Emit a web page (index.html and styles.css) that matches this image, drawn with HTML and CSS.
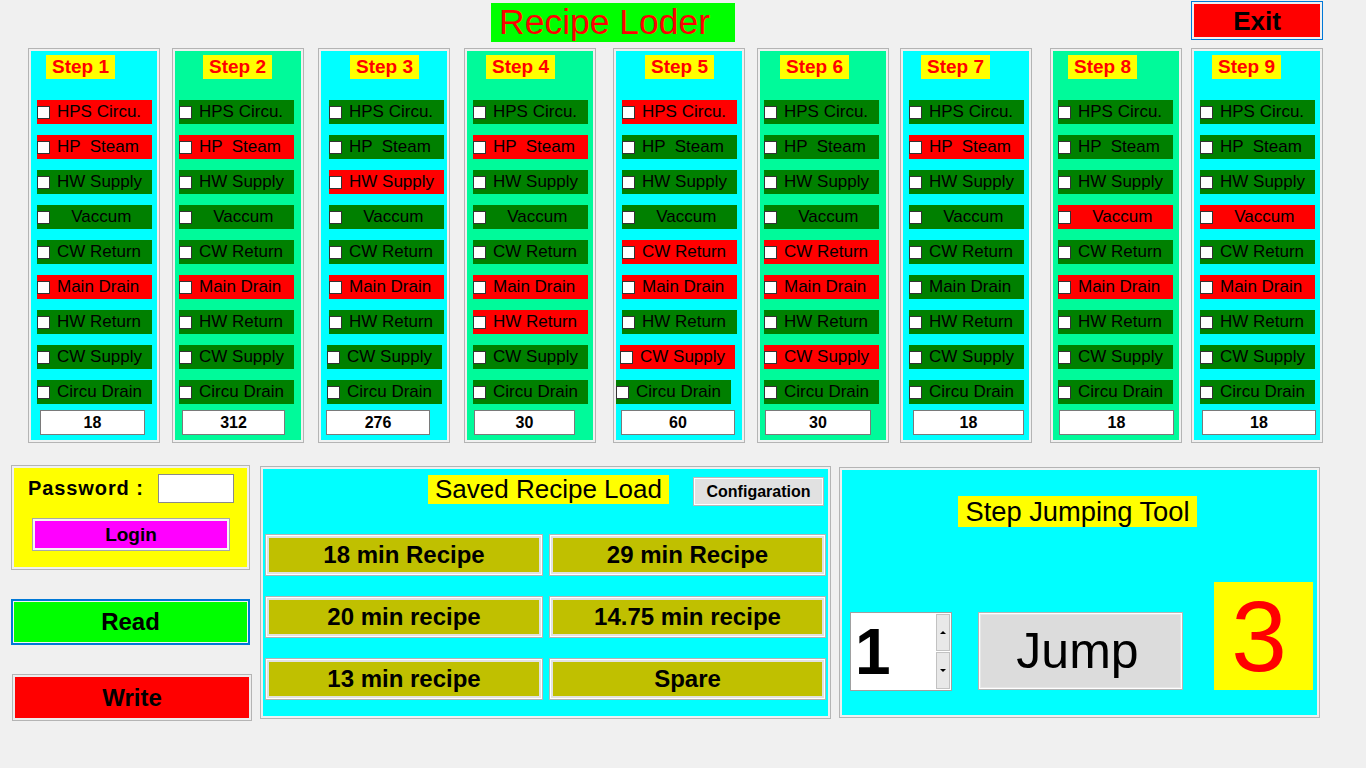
FILE: index.html
```html
<!DOCTYPE html>
<html lang="en">
<head>
<meta charset="utf-8">
<title>Recipe Loder</title>
<link rel="stylesheet" href="styles.css">
</head>
<body>
<div class="topbar">
  <div class="title">Recipe Loder</div>
  <button class="exit">Exit</button>
</div>

<div class="steps">
  <div class="step cyan s1">
    <div class="step-label">Step 1</div>
    <div class="rows">
      <div class="row on"><span class="cb"></span>HPS Circu.</div>
      <div class="row on"><span class="cb"></span>HP  Steam</div>
      <div class="row off"><span class="cb"></span>HW Supply</div>
      <div class="row off"><span class="cb"></span>   Vaccum</div>
      <div class="row off"><span class="cb"></span>CW Return</div>
      <div class="row on"><span class="cb"></span>Main Drain</div>
      <div class="row off"><span class="cb"></span>HW Return</div>
      <div class="row off"><span class="cb"></span>CW Supply</div>
      <div class="row off"><span class="cb"></span>Circu Drain</div>
    </div>
    <div class="num">18</div>
  </div>

  <div class="step spring s2">
    <div class="step-label">Step 2</div>
    <div class="rows">
      <div class="row off"><span class="cb"></span>HPS Circu.</div>
      <div class="row on"><span class="cb"></span>HP  Steam</div>
      <div class="row off"><span class="cb"></span>HW Supply</div>
      <div class="row off"><span class="cb"></span>   Vaccum</div>
      <div class="row off"><span class="cb"></span>CW Return</div>
      <div class="row on"><span class="cb"></span>Main Drain</div>
      <div class="row off"><span class="cb"></span>HW Return</div>
      <div class="row off"><span class="cb"></span>CW Supply</div>
      <div class="row off"><span class="cb"></span>Circu Drain</div>
    </div>
    <div class="num">312</div>
  </div>

  <div class="step cyan s3">
    <div class="step-label">Step 3</div>
    <div class="rows">
      <div class="row off"><span class="cb"></span>HPS Circu.</div>
      <div class="row off"><span class="cb"></span>HP  Steam</div>
      <div class="row on"><span class="cb"></span>HW Supply</div>
      <div class="row off"><span class="cb"></span>   Vaccum</div>
      <div class="row off"><span class="cb"></span>CW Return</div>
      <div class="row on"><span class="cb"></span>Main Drain</div>
      <div class="row off"><span class="cb"></span>HW Return</div>
      <div class="row off nudge"><span class="cb"></span>CW Supply</div>
      <div class="row off nudge"><span class="cb"></span>Circu Drain</div>
    </div>
    <div class="num">276</div>
  </div>

  <div class="step spring s4">
    <div class="step-label">Step 4</div>
    <div class="rows">
      <div class="row off"><span class="cb"></span>HPS Circu.</div>
      <div class="row on"><span class="cb"></span>HP  Steam</div>
      <div class="row off"><span class="cb"></span>HW Supply</div>
      <div class="row off"><span class="cb"></span>   Vaccum</div>
      <div class="row off"><span class="cb"></span>CW Return</div>
      <div class="row on"><span class="cb"></span>Main Drain</div>
      <div class="row on"><span class="cb"></span>HW Return</div>
      <div class="row off"><span class="cb"></span>CW Supply</div>
      <div class="row off"><span class="cb"></span>Circu Drain</div>
    </div>
    <div class="num">30</div>
  </div>

  <div class="step cyan s5">
    <div class="step-label">Step 5</div>
    <div class="rows">
      <div class="row on"><span class="cb"></span>HPS Circu.</div>
      <div class="row off"><span class="cb"></span>HP  Steam</div>
      <div class="row off"><span class="cb"></span>HW Supply</div>
      <div class="row off"><span class="cb"></span>   Vaccum</div>
      <div class="row on"><span class="cb"></span>CW Return</div>
      <div class="row on"><span class="cb"></span>Main Drain</div>
      <div class="row off"><span class="cb"></span>HW Return</div>
      <div class="row on nudge"><span class="cb"></span>CW Supply</div>
      <div class="row off shift"><span class="cb"></span>Circu Drain</div>
    </div>
    <div class="num">60</div>
  </div>

  <div class="step spring s6">
    <div class="step-label">Step 6</div>
    <div class="rows">
      <div class="row off"><span class="cb"></span>HPS Circu.</div>
      <div class="row off"><span class="cb"></span>HP  Steam</div>
      <div class="row off"><span class="cb"></span>HW Supply</div>
      <div class="row off"><span class="cb"></span>   Vaccum</div>
      <div class="row on"><span class="cb"></span>CW Return</div>
      <div class="row on"><span class="cb"></span>Main Drain</div>
      <div class="row off"><span class="cb"></span>HW Return</div>
      <div class="row on"><span class="cb"></span>CW Supply</div>
      <div class="row off"><span class="cb"></span>Circu Drain</div>
    </div>
    <div class="num">30</div>
  </div>

  <div class="step cyan s7">
    <div class="step-label">Step 7</div>
    <div class="rows">
      <div class="row off"><span class="cb"></span>HPS Circu.</div>
      <div class="row on"><span class="cb"></span>HP  Steam</div>
      <div class="row off"><span class="cb"></span>HW Supply</div>
      <div class="row off"><span class="cb"></span>   Vaccum</div>
      <div class="row off"><span class="cb"></span>CW Return</div>
      <div class="row off"><span class="cb"></span>Main Drain</div>
      <div class="row off"><span class="cb"></span>HW Return</div>
      <div class="row off"><span class="cb"></span>CW Supply</div>
      <div class="row off"><span class="cb"></span>Circu Drain</div>
    </div>
    <div class="num">18</div>
  </div>

  <div class="step spring s8">
    <div class="step-label">Step 8</div>
    <div class="rows">
      <div class="row off"><span class="cb"></span>HPS Circu.</div>
      <div class="row off"><span class="cb"></span>HP  Steam</div>
      <div class="row off"><span class="cb"></span>HW Supply</div>
      <div class="row on"><span class="cb"></span>   Vaccum</div>
      <div class="row off"><span class="cb"></span>CW Return</div>
      <div class="row on"><span class="cb"></span>Main Drain</div>
      <div class="row off"><span class="cb"></span>HW Return</div>
      <div class="row off"><span class="cb"></span>CW Supply</div>
      <div class="row off"><span class="cb"></span>Circu Drain</div>
    </div>
    <div class="num">18</div>
  </div>

  <div class="step cyan s9">
    <div class="step-label">Step 9</div>
    <div class="rows">
      <div class="row off"><span class="cb"></span>HPS Circu.</div>
      <div class="row off"><span class="cb"></span>HP  Steam</div>
      <div class="row off"><span class="cb"></span>HW Supply</div>
      <div class="row on"><span class="cb"></span>   Vaccum</div>
      <div class="row off"><span class="cb"></span>CW Return</div>
      <div class="row on"><span class="cb"></span>Main Drain</div>
      <div class="row off"><span class="cb"></span>HW Return</div>
      <div class="row off"><span class="cb"></span>CW Supply</div>
      <div class="row off"><span class="cb"></span>Circu Drain</div>
    </div>
    <div class="num">18</div>
  </div>
</div>

<div class="bottom">
  <div class="left">
    <div class="pw-panel">
      <div class="pw-row">
        <span class="pw-label">Password :</span>
        <input class="pw-input" type="password">
      </div>
      <button class="login">Login</button>
    </div>
    <button class="read">Read</button>
    <button class="write">Write</button>
  </div>

  <div class="recipe-panel">
    <div class="rec-head">
      <div class="rec-title">Saved Recipe Load</div>
      <button class="config">Configaration</button>
    </div>
    <div class="rec-grid">
      <button class="rec-btn">18 min Recipe</button>
      <button class="rec-btn">29 min Recipe</button>
      <button class="rec-btn">20 min recipe</button>
      <button class="rec-btn">14.75 min recipe</button>
      <button class="rec-btn">13 min recipe</button>
      <button class="rec-btn">Spare</button>
    </div>
  </div>

  <div class="jump-panel">
    <div class="jump-title">Step Jumping Tool</div>
    <div class="jump-row">
      <div class="spin">
        <div class="spin-val">1</div>
        <div class="spin-btns">
          <span class="spin-btn up"></span>
          <span class="spin-btn down"></span>
        </div>
      </div>
      <button class="jump-btn">Jump</button>
      <div class="big3">3</div>
    </div>
  </div>
</div>
</body>
</html>
```

FILE: styles.css
```css
* { box-sizing: border-box; }

html, body { margin: 0; padding: 0; }

body {
  width: 1366px;
  height: 768px;
  overflow: hidden;
  background: #f0f0f0;
  color: #000;
  font-family: "Liberation Sans", Arial, sans-serif;
}

button, input {
  font-family: inherit;
  color: #000;
  margin: 0;
  padding: 0;
}

/* ---------- top bar ---------- */
.topbar {
  display: flex;
  height: 48px;
}

.title {
  margin: 3px 0 0 491px;
  width: 244px;
  height: 39px;
  padding-left: 8px;
  background: #00ff00;
  color: #ff0000;
  font-size: 35.5px;
  line-height: 39px;
  white-space: nowrap;
}

.exit {
  margin: 1px 0 0 456px;
  width: 132px;
  height: 39px;
  border: 1px solid #0078d7;
  box-shadow: inset 0 0 0 2px #f0f0f0;
  background: #ff0000;
  font-size: 26px;
  font-weight: bold;
  line-height: 1;
}

/* ---------- step columns ---------- */
.steps {
  display: grid;
  grid-template-columns: 144px 146px 146px 149px 144px 143px 150px 141px 132px;
  margin-left: 28px;
  height: 395px;
}

.step {
  width: 132px;
  height: 395px;
  border: 1px solid #b4b4b4;
  box-shadow: inset 0 0 0 2px #f0f0f0;
  padding-top: 6px;
}

.step.cyan { background: #00ffff; }
.step.spring { background: #00fa9a; }

.s1 { --lx: 18px; --bx: 8px; --nx: 12px; --nw: 105px; }
.s2 { --lx: 31px; --bx: 6px; --nx: 10px; --nw: 103px; }
.s3 { --lx: 32px; --bx: 10px; --nx: 8px; --nw: 104px; }
.s4 { --lx: 22px; --bx: 8px; --nx: 10px; --nw: 101px; }
.s5 { --lx: 32px; --bx: 8px; --nx: 8px; --nw: 114px; }
.s6 { --lx: 23px; --bx: 6px; --nx: 8px; --nw: 106px; }
.s7 { --lx: 21px; --bx: 8px; --nx: 13px; --nw: 111px; }
.s8 { --lx: 18px; --bx: 7px; --nx: 9px; --nw: 115px; }
.s9 { --lx: 21px; --bx: 8px; --nx: 11px; --nw: 114px; }

.step-label {
  margin-left: calc(var(--lx) - 1px);
  width: 69px;
  height: 24px;
  background: #ffff00;
  color: #ff0000;
  font-size: 19px;
  font-weight: bold;
  line-height: 24px;
  text-align: center;
}

.rows {
  margin-top: 21px;
  padding-left: var(--bx);
  display: flex;
  flex-direction: column;
  gap: 11px;
}

.row {
  width: 115px;
  height: 24px;
  display: flex;
  align-items: center;
  font-size: 17px;
  white-space: pre;
}

.row.on { background: #ff0000; }
.row.off { background: #008000; }
.row.nudge { margin-left: -2px; }
.row.shift { margin-left: -6px; }

.cb {
  flex: none;
  width: 13px;
  height: 13px;
  margin-right: 7px;
  background: #fff;
  border: 1px solid #333;
}

.num {
  margin: 6px 0 0 calc(var(--nx) - 1px);
  width: var(--nw);
  height: 25px;
  background: #fff;
  border: 1px solid #7a7a7a;
  font-size: 16px;
  font-weight: bold;
  line-height: 23px;
  text-align: center;
}

/* ---------- bottom area ---------- */
.bottom {
  display: flex;
  align-items: flex-start;
  margin-top: 22px;
}

.left {
  margin-left: 11px;
  width: 239px;
  display: flex;
  flex-direction: column;
}

.pw-panel {
  height: 105px;
  border: 1px solid #b4b4b4;
  box-shadow: inset 0 0 0 2px #f0f0f0;
  background: #ffff00;
}

.pw-row {
  display: flex;
  align-items: center;
  margin-top: 8px;
  padding-left: 16px;
}

.pw-label {
  width: 130px;
  font-size: 20px;
  font-weight: bold;
  letter-spacing: 0.9px;
  white-space: nowrap;
}

.pw-input {
  width: 76px;
  height: 29px;
  border: 1px solid #8a8a8a;
  background: #fff;
  outline: none;
}

.login {
  display: block;
  margin: 15px 0 0 20px;
  width: 198px;
  height: 33px;
  border: 1px solid #a8a8a8;
  box-shadow: inset 0 0 0 2px #f4f4f4;
  background: #ff00ff;
  font-size: 19px;
  font-weight: bold;
}

.read {
  margin-top: 29px;
  width: 239px;
  height: 46px;
  border: 2px solid #0078d7;
  box-shadow: inset 0 0 0 1px #f4f4f4;
  background: #00ff00;
  font-size: 24px;
  font-weight: bold;
}

.write {
  margin: 29px 0 0 1px;
  width: 240px;
  height: 47px;
  border: 1px solid #b4b4b4;
  box-shadow: inset 0 0 0 2px #ececec;
  background: #ff0000;
  font-size: 24px;
  font-weight: bold;
}

/* saved recipe panel */
.recipe-panel {
  margin: 1px 0 0 10px;
  width: 571px;
  height: 253px;
  border: 1px solid #b4b4b4;
  box-shadow: inset 0 0 0 2px #f0f0f0;
  background: #00ffff;
}

.rec-head {
  display: flex;
  align-items: flex-start;
  margin-top: 8px;
}

.rec-title {
  margin-left: 167px;
  width: 241px;
  height: 29px;
  background: #ffff00;
  font-size: 26px;
  line-height: 29px;
  text-align: center;
  white-space: nowrap;
}

.config {
  margin: 2px 0 0 24px;
  width: 131px;
  height: 29px;
  border: 1px solid #b9b9b9;
  box-shadow: inset 0 0 0 1px #fff;
  background: #e1e1e1;
  font-size: 16px;
  font-weight: bold;
}

.rec-grid {
  display: grid;
  grid-template-columns: 278px 277px;
  column-gap: 6px;
  row-gap: 20px;
  margin: 28px 0 0 4px;
}

.rec-btn {
  height: 42px;
  border: 1px solid #b4b4b4;
  box-shadow: inset 0 0 0 1px #fff, inset 0 0 0 3px #e2e2e2;
  background: #c0c000;
  font-size: 24px;
  font-weight: bold;
  white-space: nowrap;
}

/* step jumping panel */
.jump-panel {
  margin: 2px 0 0 8px;
  width: 481px;
  height: 251px;
  border: 1px solid #b4b4b4;
  box-shadow: inset 0 0 0 2px #f0f0f0;
  background: #00ffff;
}

.jump-title {
  margin: 28px 0 0 118px;
  width: 239px;
  height: 31px;
  background: #ffff00;
  font-size: 27.3px;
  line-height: 31px;
  text-align: center;
  white-space: nowrap;
}

.jump-row {
  display: flex;
  align-items: flex-start;
  margin: 55px 0 0 10px;
}

.spin {
  margin-top: 30px;
  width: 102px;
  height: 79px;
  border: 1px solid #a0a0a0;
  background: #fff;
  display: flex;
}

.spin-val {
  flex: 1;
  display: flex;
  align-items: center;
  padding: 0 0 0 4px;
  font-size: 64px;
  font-weight: bold;
  line-height: 1;
}

.spin-btns {
  width: 14px;
  margin: 1px 1px 1px 0;
  display: flex;
  flex-direction: column;
  gap: 1px;
}

.spin-btn {
  flex: 1;
  display: flex;
  align-items: center;
  justify-content: center;
  background: #e8e8e8;
  border: 1px solid #c2c2c2;
}

.spin-btn::after {
  content: "";
  width: 0;
  height: 0;
  border-left: 3px solid transparent;
  border-right: 3px solid transparent;
}

.spin-btn.up::after { border-bottom: 3px solid #000; }
.spin-btn.down::after { border-top: 3px solid #000; }

.jump-btn {
  margin: 30px 0 0 26px;
  width: 205px;
  height: 78px;
  border: 1px solid #b4b4b4;
  box-shadow: inset 0 0 0 1px #fff, inset 0 0 0 2px #e6e6e6;
  background: #dcdcdc;
  font-size: 50px;
  line-height: 1;
  padding-right: 6px;
}

.big3 {
  margin-left: 31px;
  width: 99px;
  height: 108px;
  display: flex;
  align-items: center;
  justify-content: center;
  padding-right: 9px;
  background: #ffff00;
  color: #ff0000;
  font-size: 100px;
  line-height: 1;
}
```
